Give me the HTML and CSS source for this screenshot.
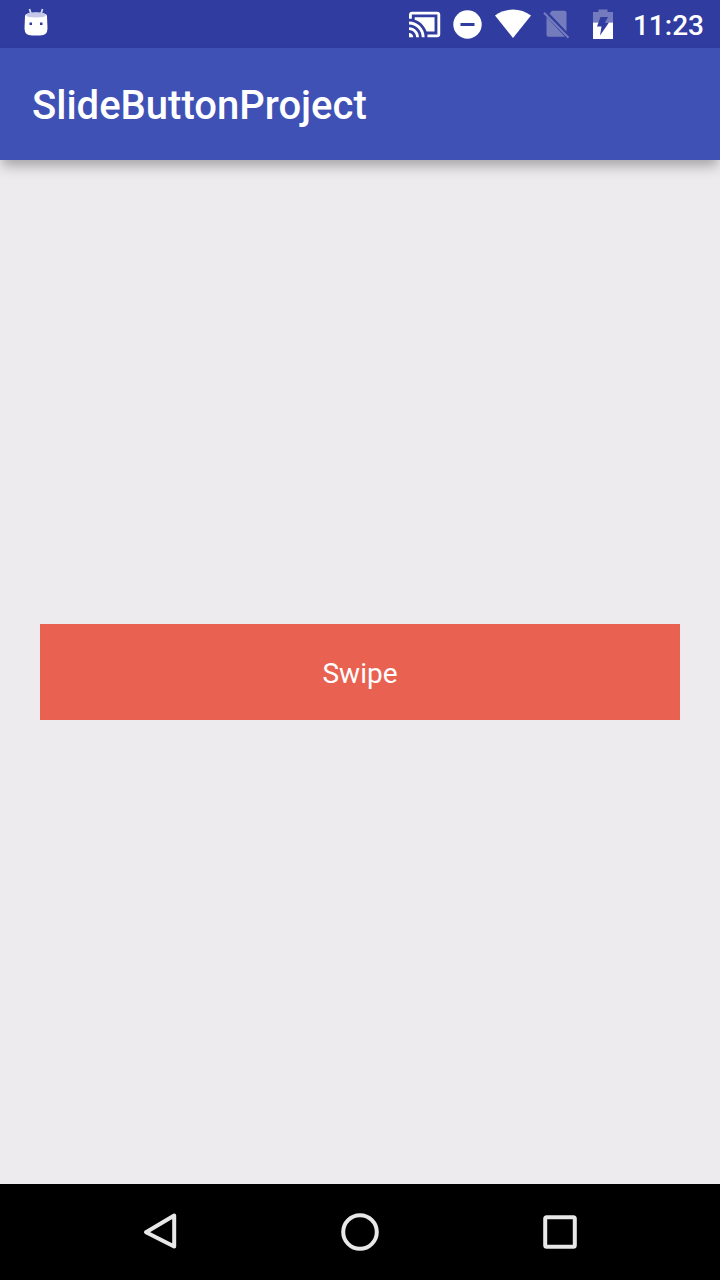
FILE: index.html
```html
<!DOCTYPE html>
<html lang="en">
<head>
<meta charset="utf-8">
<meta name="viewport" content="width=device-width, initial-scale=1">
<title>SlideButtonProject</title>
<link rel="stylesheet" href="styles.css">
</head>
<body>
<div class="screen">
  <div class="status-bar">
    <svg class="icon" width="24" height="48" viewBox="0 0 24 48" aria-label="Android">
      <path d="M5.500 9l1.500 5M18.500 9L17 14" stroke="#d5d7ef" stroke-width="1.800"/>
      <path d="M1 16Q1 12.500 12 12.500t11 3.500l.5 12.500q0 7-7.500 7h-8Q.5 35.500 .5 28.500z" fill="#fff"/>
      <path d="M2 15q1-2.500 10-2.500T22 15q0 2.500-10 2.500T2 15z" fill="#c5c8e8"/>
      <path d="M5.500 22.500h2.500v2.500H5.500zM16 22.500h2.500v2.500H16z" fill="#303c9f"/>
    </svg>
    <div class="status-icons">
      <svg class="icon" width="33" height="48" viewBox="0 0 33 48" aria-label="Cast">
        <path transform="translate(-.42 7.400) scale(1.420)" fill="#fff" d="M1 18v3h3c0-1.660-1.340-3-3-3zm0-4v2c2.760 0 5 2.240 5 5h2c0-3.870-3.130-7-7-7zm18-7H5v1.630c3.960 1.280 7.090 4.410 8.370 8.370H19V7zM1 10v2c4.970 0 9 4.030 9 9h2c0-6.080-4.930-11-11-11zm20-7H3c-1.100 0-2 .9-2 2v3h2V5h18v14h-7v2h7c1.100 0 2-.9 2-2V5c0-1.100-.9-2-2-2z"/>
      </svg>
      <svg class="icon" width="30" height="48" viewBox="0 0 30 48" aria-label="Do not disturb">
        <circle cx="14.500" cy="24.500" r="14.200" fill="#fff"/>
        <path d="M7.500 24.500h14" stroke="#303c9f" stroke-width="3"/>
      </svg>
      <svg class="icon" width="36" height="48" viewBox="0 0 36 48" aria-label="Wi-Fi">
        <path d="M0 15.500Q8 9.500 18 9.500t18 6L18 38z" fill="#fff"/>
      </svg>
      <svg class="icon" width="27" height="48" viewBox="0 0 27 48" aria-label="No SIM card">
        <path d="M9 10.800h12.500q2 0 2 2V31.500L6.500 13.500zM3.500 17L22 36.700h-16.500q-2 0-2-2z" fill="#747cbd"/>
        <path d="M1 12.800l24.500 25" stroke="#747cbd" stroke-width="2"/>
      </svg>
      <svg class="icon" width="39" height="48" viewBox="0 0 39 48" aria-label="Battery charging">
        <path d="M11 22.500V12h5.500V9.500h9V12H31v10.500z" fill="#747cbd"/>
        <path d="M11 22.500h20V39H11z" fill="#fff"/>
        <path d="M18.500 17H26l-3 5.500h4L18 35.500l1.500-9H15z" fill="#303c9f"/>
      </svg>
      <time class="clock" datetime="11:23">11:23</time>
    </div>
  </div>
  <header class="app-bar"><h1 class="title">SlideButtonProject</h1></header>
  <main class="content">
    <button class="swipe" type="button">Swipe</button>
  </main>
  <nav class="nav-bar" aria-label="System">
    <button class="nav-button" type="button" aria-label="Back">
      <svg class="icon" width="40" height="40" viewBox="0 0 40 40"><path d="M34.200 3.500v31L6 20.200z" fill="none" stroke="#e9e8e9" stroke-width="4" stroke-linejoin="round"/></svg>
    </button>
    <button class="nav-button" type="button" aria-label="Home">
      <svg class="icon" width="40" height="40" viewBox="0 0 40 40"><circle cx="20" cy="20" r="16.800" fill="none" stroke="#e9e8e9" stroke-width="4"/></svg>
    </button>
    <button class="nav-button" type="button" aria-label="Overview">
      <svg class="icon" width="40" height="40" viewBox="0 0 40 40"><rect x="5.200" y="5.200" width="29.600" height="29.600" rx="1.500" fill="none" stroke="#e9e8e9" stroke-width="4"/></svg>
    </button>
  </nav>
</div>
</body>
</html>
```
FILE: styles.css
```css
* {
  box-sizing: border-box;
}

body {
  margin: 0;
  font-family: Roboto, "Liberation Sans", sans-serif;
  background: #edebee;
}

.screen {
  display: flex;
  flex-direction: column;
  min-height: 100vh;
}

.icon {
  display: block;
  flex: none;
}

.status-bar {
  display: flex;
  justify-content: space-between;
  padding: 0 16px 0 24px;
  background: #303c9f;
}

.status-icons {
  display: flex;
  gap: 12px;
}

.clock {
  color: #fff;
  font-size: 28px;
  font-weight: 500;
  line-height: 52px;
  height: 48px;
}

.app-bar {
  padding: 34px 32px 30px;
  background: #3f51b5;
  box-shadow: 0 8px 12px -2px rgba(0, 0, 0, 0.3);
}

.title {
  margin: 0;
  color: #fff;
  font-size: 40px;
  font-weight: 500;
  line-height: 48px;
}

.content {
  display: flex;
  flex: 1;
  align-items: center;
  padding: 0 40px;
}

.swipe {
  flex: 1;
  padding: 34px 32px 30px;
  border: 0;
  background: #e96151;
  color: #fff;
  font-family: inherit;
  font-size: 28px;
  line-height: 32px;
}

.nav-bar {
  display: flex;
  justify-content: center;
  padding: 0 60px;
  background: #000;
}

.nav-button {
  display: flex;
  flex: 1;
  justify-content: center;
  padding: 28px 0;
  border: 0;
  background: none;
}
```
